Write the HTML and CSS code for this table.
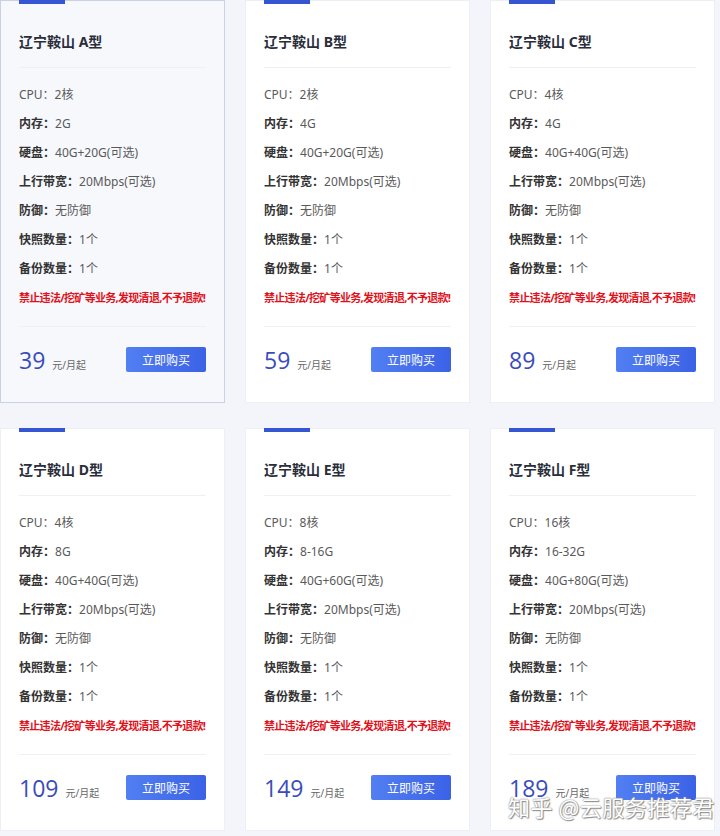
FILE: index.html
```html
<!DOCTYPE html>
<html lang="zh-CN">
<head>
    <meta charset="UTF-8">
    <title>辽宁鞍山 云服务器</title>
    <meta name="viewport" content="width=device-width, initial-scale=1">
    <link rel="stylesheet" href="styles.css">
</head>
<body>
<div class="plans">
    <div class="card active">
        <div class="bar"></div>
        <h3>辽宁鞍山 A型</h3>
        <ul class="specs">
            <li>CPU：2核</li>
            <li><b>内存：</b>2G</li>
            <li><b>硬盘：</b>40G+20G(可选)</li>
            <li><b>上行带宽：</b>20Mbps(可选)</li>
            <li><b>防御：</b>无防御</li>
            <li><b>快照数量：</b>1个</li>
            <li><b>备份数量：</b>1个</li>
            <li class="warn">禁止违法/挖矿等业务,发现清退,不予退款!</li>
        </ul>
        <div class="foot">
            <span class="price">39</span><span class="unit">元/月起</span>
            <button type="button">立即购买</button>
        </div>
    </div>
    <div class="card">
        <div class="bar"></div>
        <h3>辽宁鞍山 B型</h3>
        <ul class="specs">
            <li>CPU：2核</li>
            <li><b>内存：</b>4G</li>
            <li><b>硬盘：</b>40G+20G(可选)</li>
            <li><b>上行带宽：</b>20Mbps(可选)</li>
            <li><b>防御：</b>无防御</li>
            <li><b>快照数量：</b>1个</li>
            <li><b>备份数量：</b>1个</li>
            <li class="warn">禁止违法/挖矿等业务,发现清退,不予退款!</li>
        </ul>
        <div class="foot">
            <span class="price">59</span><span class="unit">元/月起</span>
            <button type="button">立即购买</button>
        </div>
    </div>
    <div class="card">
        <div class="bar"></div>
        <h3>辽宁鞍山 C型</h3>
        <ul class="specs">
            <li>CPU：4核</li>
            <li><b>内存：</b>4G</li>
            <li><b>硬盘：</b>40G+40G(可选)</li>
            <li><b>上行带宽：</b>20Mbps(可选)</li>
            <li><b>防御：</b>无防御</li>
            <li><b>快照数量：</b>1个</li>
            <li><b>备份数量：</b>1个</li>
            <li class="warn">禁止违法/挖矿等业务,发现清退,不予退款!</li>
        </ul>
        <div class="foot">
            <span class="price">89</span><span class="unit">元/月起</span>
            <button type="button">立即购买</button>
        </div>
    </div>
    <div class="card">
        <div class="bar"></div>
        <h3>辽宁鞍山 D型</h3>
        <ul class="specs">
            <li>CPU：4核</li>
            <li><b>内存：</b>8G</li>
            <li><b>硬盘：</b>40G+40G(可选)</li>
            <li><b>上行带宽：</b>20Mbps(可选)</li>
            <li><b>防御：</b>无防御</li>
            <li><b>快照数量：</b>1个</li>
            <li><b>备份数量：</b>1个</li>
            <li class="warn">禁止违法/挖矿等业务,发现清退,不予退款!</li>
        </ul>
        <div class="foot">
            <span class="price">109</span><span class="unit">元/月起</span>
            <button type="button">立即购买</button>
        </div>
    </div>
    <div class="card">
        <div class="bar"></div>
        <h3>辽宁鞍山 E型</h3>
        <ul class="specs">
            <li>CPU：8核</li>
            <li><b>内存：</b>8-16G</li>
            <li><b>硬盘：</b>40G+60G(可选)</li>
            <li><b>上行带宽：</b>20Mbps(可选)</li>
            <li><b>防御：</b>无防御</li>
            <li><b>快照数量：</b>1个</li>
            <li><b>备份数量：</b>1个</li>
            <li class="warn">禁止违法/挖矿等业务,发现清退,不予退款!</li>
        </ul>
        <div class="foot">
            <span class="price">149</span><span class="unit">元/月起</span>
            <button type="button">立即购买</button>
        </div>
    </div>
    <div class="card">
        <div class="bar"></div>
        <h3>辽宁鞍山 F型</h3>
        <ul class="specs">
            <li>CPU：16核</li>
            <li><b>内存：</b>16-32G</li>
            <li><b>硬盘：</b>40G+80G(可选)</li>
            <li><b>上行带宽：</b>20Mbps(可选)</li>
            <li><b>防御：</b>无防御</li>
            <li><b>快照数量：</b>1个</li>
            <li><b>备份数量：</b>1个</li>
            <li class="warn">禁止违法/挖矿等业务,发现清退,不予退款!</li>
        </ul>
        <div class="foot">
            <span class="price">189</span><span class="unit">元/月起</span>
            <button type="button">立即购买</button>
        </div>
    </div>
</div>
<div class="watermark">知乎 @云服务推荐君</div>
</body>
</html>
```

FILE: styles.css
```css
body { margin: 0; background: #f3f5fa; font-family: "Noto Sans", "Noto Sans CJK SC", sans-serif; position: relative; height: 836px; overflow: hidden;}
.plans { display: grid; grid-template-columns: repeat(3, 225px); column-gap: 20px; row-gap: 25px;}
.card { height: 403px; box-sizing: border-box; background: #fff; border: 1px solid #eceff5; padding: 0 18px 0 18px; display: flex; flex-direction: column;}
.card.active { background: #f6f8fc; border-color: #c9d1e3;}
.bar { width: 46px; height: 4px; background: #3555d2; margin-top: -1px;}
h3 { margin: 28px 0 0 0; font-size: 14px; line-height: 20px; color: #2a2e3b; font-weight: 700; padding-bottom: 15px; border-bottom: 1px solid #eef0f4;}
.specs { list-style: none; margin: 12px 0 0 0; padding: 0 0 14px 0; border-bottom: 1px solid #eef0f4;}
.specs li { font-size: 12px; line-height: 29px; color: #5a5a5a; white-space: nowrap;}
.specs b { color: #333; font-weight: 700;}
.specs .warn { color: #e0111b; font-weight: 700; font-size: 11px; letter-spacing: -0.7px;}
.foot { display: flex; align-items: baseline; padding-top: 20px;}
.price { font-size: 23px; line-height: 27px; color: #3a4cba; font-family: "Open Sans", sans-serif;}
.unit { font-size: 10px; color: #666; margin-left: 7px;}
.foot button { margin-left: auto; width: 80px; height: 25px; border: none; border-radius: 2px; color: #fff; font-size: 12px; font-family: "Noto Sans CJK SC", sans-serif; background: linear-gradient(90deg, #527ff2, #3b62e6); cursor: pointer; align-self: flex-start;}
.watermark { position: absolute; left: 508px; top: 790px; font-size: 22px; color: #fff; font-family: "Noto Sans CJK SC", sans-serif; text-shadow: 0 0 1px #888, 0 0 2px #999, 1px 1px 1px #888; letter-spacing: 0.5px;}
```
